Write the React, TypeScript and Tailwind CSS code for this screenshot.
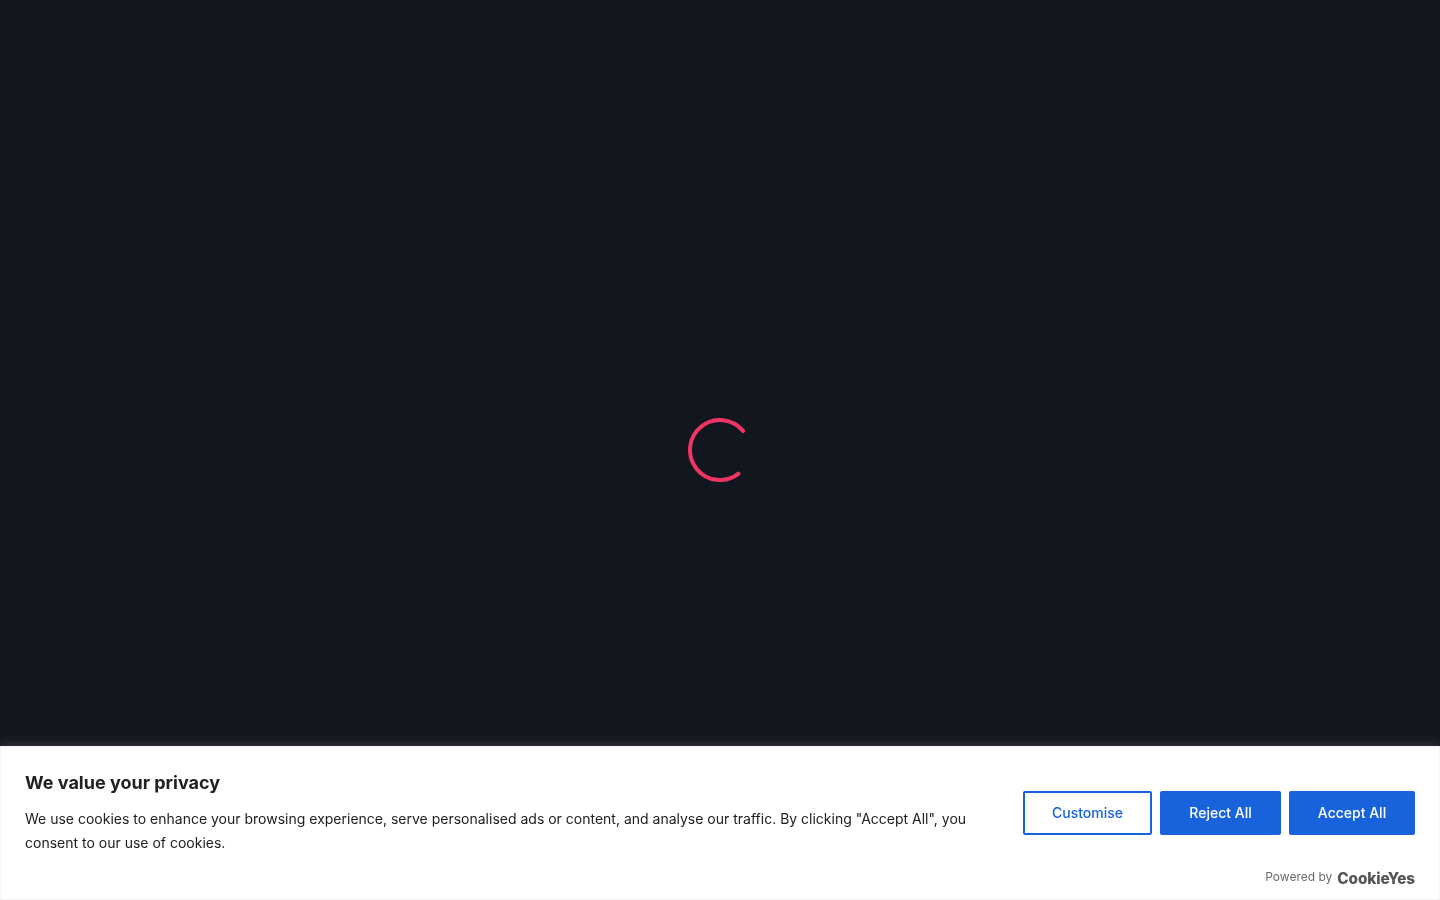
export default function App() {
  return (
    <div className="h-screen w-full overflow-hidden bg-[#11161f] flex items-center justify-center font-['Inter',sans-serif]">
      <svg width="64" height="64" viewBox="0 0 64 64" fill="none" className="block">
        <path
          d="M 55.11 12.89 A 30 30 0 1 0 50.47 55.64"
          stroke="#ee3563"
          strokeWidth="4"
          strokeLinecap="round"
        />
      </svg>
      <div className="fixed bottom-0 left-0 right-0 h-[154px] bg-white border border-[#f4f4f4] shadow-[0_-1px_10px_0_rgba(172,171,171,0.3)] pt-[21px] pb-[12px] pl-6 pr-6 flex flex-col">
        <div className="flex justify-between items-center flex-1">
          <div className="w-[950px] self-start">
            <p className="text-[18px] leading-[30px] font-bold text-[#212121]">We value your privacy</p>
            <p className="mt-[9px] text-[14px] leading-[24px] text-[#212121]">
              We use cookies to enhance your browsing experience, serve personalised ads or content, and analyse our traffic. By clicking "Accept All", you consent to our use of cookies.
            </p>
          </div>
          <div className="flex gap-2 self-start mt-[23px]">
            <button className="h-[44px] w-[129px] pb-[2px] border-2 border-[#1863dc] rounded-[2px] bg-white text-[#1863dc] text-[14px] font-medium">Customise</button>
            <button className="h-[44px] w-[121px] pb-[2px] border-2 border-[#1863dc] rounded-[2px] bg-[#1863dc] text-white text-[14px] font-medium">Reject All</button>
            <button className="h-[44px] w-[126px] pb-[2px] border-2 border-[#1863dc] rounded-[2px] bg-[#1863dc] text-white text-[14px] font-medium">Accept All</button>
          </div>
        </div>
        <div className="flex justify-end items-center gap-[5px]">
          <span className="text-[12px] leading-[16px] text-[#6b6b6b]">Powered by</span>
          <span className="mt-[4px] text-[15.3px] leading-[16px] font-extrabold text-[#555555] tracking-[-0.1px]">CookieYes</span>
        </div>
      </div>
    </div>
  );
}
